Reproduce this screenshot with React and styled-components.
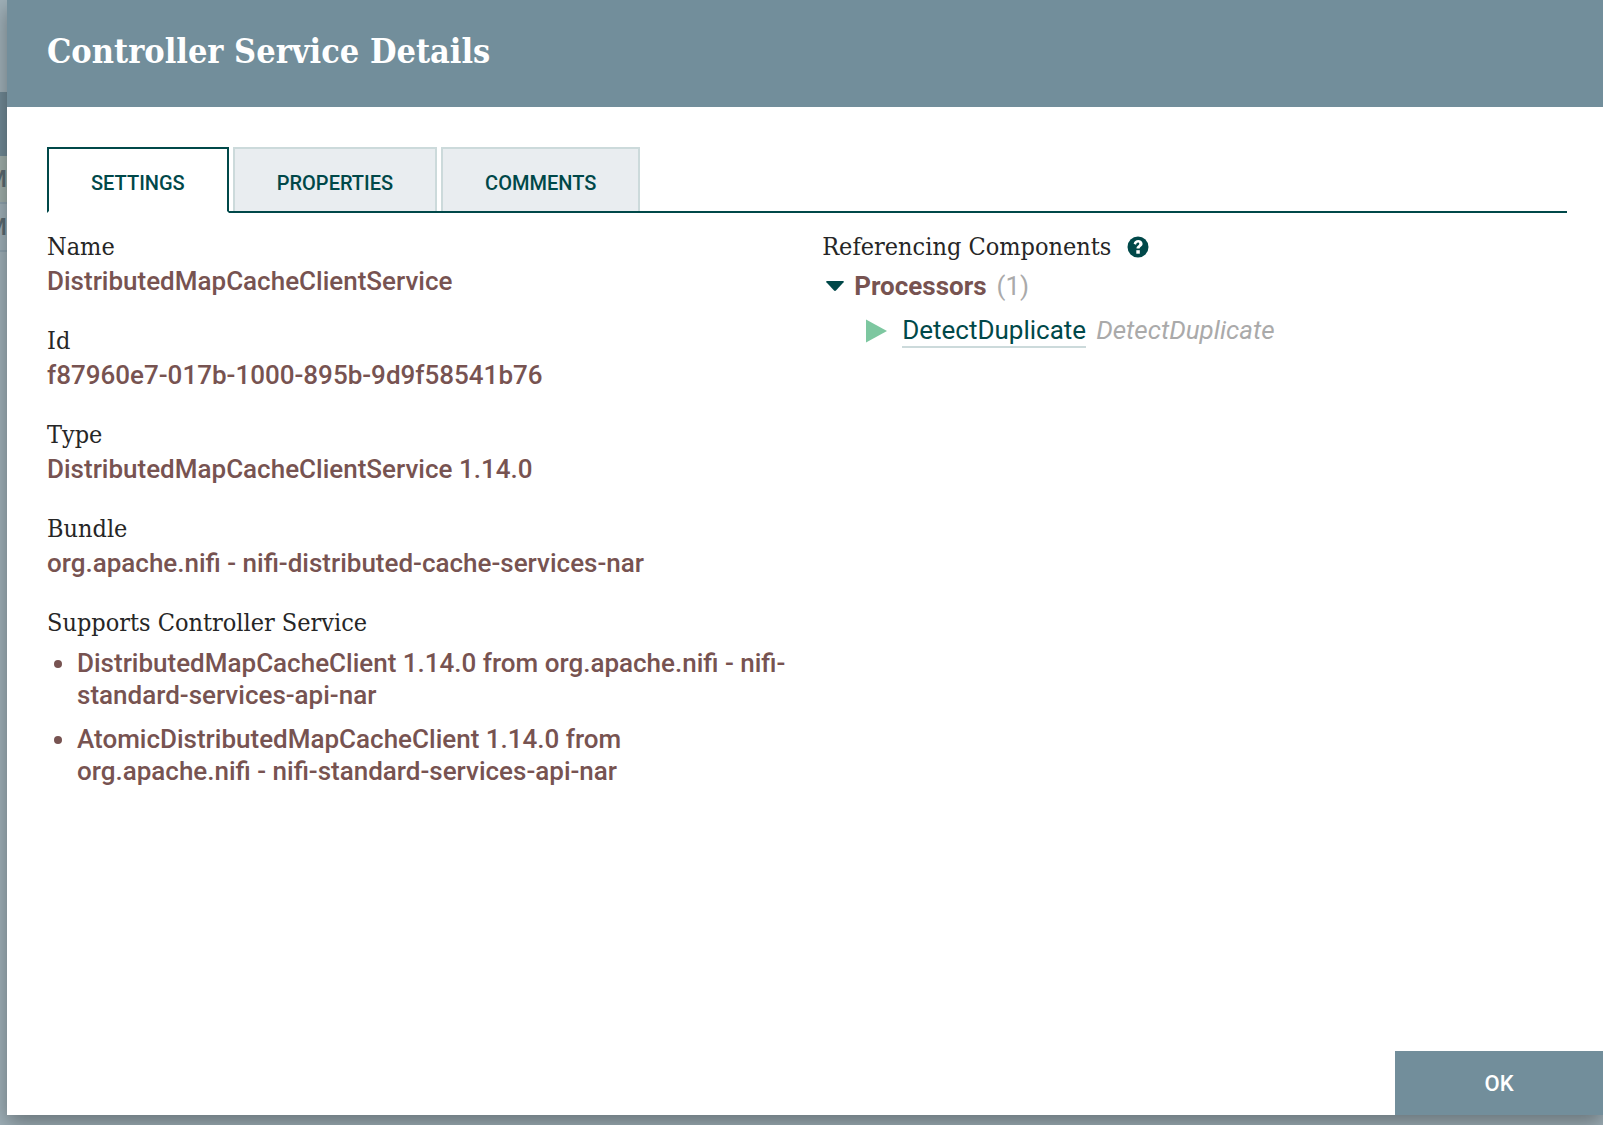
import React, { useState } from "react";
import styled, { createGlobalStyle } from "styled-components";

const colors = {
  slate: "#728e9b",
  teal: "#004849",
  brown: "#775351",
  mist: "#ccdadb",
  muted: "#aaaaaa",
  running: "#7dc7a0",
};

const slab = '"Roboto Slab", "DejaVu Serif Condensed", "DejaVu Serif", serif';

const GlobalStyle = createGlobalStyle`
  * { box-sizing: border-box; }
  body {
    margin: 0;
    font-family: Roboto, "Liberation Sans", sans-serif;
    font-size: 26px;
    line-height: 32px;
    color: ${colors.brown};
    background: #9aabb3;
  }
`;

const Page = styled.div`
  display: grid;
  grid-template: minmax(100vh, auto) / minmax(0, 1fr);
  overflow: hidden;
`;

const Backdrop = styled.div`
  grid-area: 1 / 1;
  padding-top: 92px;
  background: #9fb0b8;
`;

const BackdropHeader = styled.div`
  height: 64px;
  background: #708995;
`;

const BackdropRow = styled.div`
  display: flex;
  justify-content: flex-end;
  align-items: center;
  width: 7px;
  height: 48px;
  overflow: hidden;
  border-bottom: 2px solid #8fa3ae;
  background: ${(p) => (p.$selected ? "#a0afaa" : "#9fb0b8")};
  color: #5a6a72;
  font-size: 24px;
  font-weight: 500;
`;

const Dialog = styled.section`
  grid-area: 1 / 1;
  display: flex;
  flex-direction: column;
  margin: 0 0 10px 7px;
  background: #fff;
  box-shadow: 0 8px 20px rgba(0, 0, 0, 0.35);
`;

const DialogHeader = styled.header`
  display: flex;
  align-items: center;
  height: 107px;
  padding: 0 40px 6px;
  background: ${colors.slate};
`;

const Title = styled.h1`
  margin: 0;
  color: #fff;
  font-family: ${slab};
  font-size: 34px;
  line-height: 48px;
  font-weight: 700;
`;

const Body = styled.div`
  flex: 1;
  padding: 40px 36px 40px 40px;
`;

const TabList = styled.div`
  display: flex;
  align-items: flex-start;
  gap: 4px;
  border-bottom: 2px solid ${colors.teal};
`;

const Tab = styled.button`
  height: ${(p) => (p.$active ? 66 : 64)}px;
  margin: 0 0 ${(p) => (p.$active ? -2 : 0)}px;
  padding: 6px 42px 0;
  border: 2px solid ${(p) => (p.$active ? colors.teal : colors.mist)};
  border-bottom: ${(p) => (p.$active ? "2px solid #fff" : "0")};
  background: ${(p) => (p.$active ? "#fff" : "#e9edf0")};
  color: ${colors.teal};
  font-family: inherit;
  font-size: 20px;
  font-weight: 500;
  text-transform: uppercase;
  cursor: pointer;
`;

const Columns = styled.div`
  display: grid;
  grid-template-columns: 51fr 49fr;
  padding-top: 18px;
`;

const Settings = styled.dl`
  margin: 0;
  padding-right: 30px;
`;

const Setting = styled.div`
  margin-bottom: 28px;
`;

const labelText = `
  margin: 0;
  color: #262626;
  font-family: ${slab};
  font-size: 25px;
  line-height: 32px;
  font-weight: 400;
`;

const Label = styled.dt`
  ${labelText}
`;

const Value = styled.dd`
  margin: 0;
  padding-top: 2px;
  font-weight: 500;
`;

const ServiceList = styled.ul`
  display: grid;
  gap: 12px;
  margin: 0;
  padding: 6px 0 0 30px;
`;

const References = styled.section`
  color: ${colors.muted};
`;

const ReferencesHeader = styled.div`
  display: flex;
  align-items: center;
  gap: 16px;
`;

const Heading = styled.h2`
  ${labelText}
`;

const IconButton = styled.button`
  display: flex;
  padding: 0;
  border: 0;
  background: none;
  color: ${colors.teal};
  cursor: pointer;
`;

const Group = styled.button`
  display: flex;
  align-items: center;
  gap: 10px;
  margin-top: 7px;
  padding: 0 0 0 4px;
  border: 0;
  background: none;
  color: ${colors.muted};
  font: inherit;
  cursor: pointer;
`;

const GroupName = styled.span`
  color: ${colors.brown};
  font-weight: 700;
`;

const ComponentRow = styled.div`
  display: flex;
  align-items: baseline;
  gap: 10px;
  padding: 12px 0 0 44px;
`;

const RunIcon = styled.svg`
  align-self: center;
  margin-right: 5px;
`;

const ComponentLink = styled.a`
  border-bottom: 2px solid ${colors.mist};
  color: ${colors.teal};
  text-decoration: none;
`;

const ComponentType = styled.span`
  font-style: italic;
`;

const Footer = styled.footer`
  display: flex;
  justify-content: flex-end;
`;

const OkButton = styled.button`
  width: 208px;
  height: 64px;
  padding: 0;
  border: 0;
  background: ${colors.slate};
  color: #fff;
  font-family: inherit;
  font-size: 22px;
  font-weight: 500;
  cursor: pointer;
`;

const tabs = ["Settings", "Properties", "Comments"];

const settings = [
  ["Name", "DistributedMapCacheClientService"],
  ["Id", "f87960e7-017b-1000-895b-9d9f58541b76"],
  ["Type", "DistributedMapCacheClientService 1.14.0"],
  ["Bundle", "org.apache.nifi - nifi-distributed-cache-services-nar"],
];

const services = [
  "DistributedMapCacheClient 1.14.0 from org.apache.nifi - nifi-standard-services-api-nar",
  "AtomicDistributedMapCacheClient 1.14.0 from org.apache.nifi - nifi-standard-services-api-nar",
];

function HelpIcon() {
  return (
    <svg width="22" height="22" viewBox="0 0 22 22" aria-hidden="true">
      <circle cx="11" cy="11" r="10.5" fill="currentColor" />
      <path
        d="M6.600 7.700C7.300 5.300 8.900 4 11.200 4c2.400 0 4.400 1.500 4.400 3.700 0 2.900-3 3-3 4.900H9.500c0-3.100 2.800-3.200 2.800-4.900 0-.7-.5-1.200-1.300-1.200-1 0-1.400.8-2 2.200z"
        fill="#fff"
      />
      <rect x="9.300" y="14.200" width="3.500" height="3.500" fill="#fff" />
    </svg>
  );
}

export default function App() {
  const [active, setActive] = useState("Settings");
  const [open, setOpen] = useState(true);

  return (
    <>
      <GlobalStyle />
      <Page>
        <Backdrop aria-hidden="true">
          <BackdropHeader />
          <BackdropRow $selected>M</BackdropRow>
          <BackdropRow>M</BackdropRow>
        </Backdrop>
        <Dialog role="dialog" aria-labelledby="dialog-title">
          <DialogHeader>
            <Title id="dialog-title">Controller Service Details</Title>
          </DialogHeader>
          <Body>
            <TabList role="tablist">
              {tabs.map((tab) => (
                <Tab
                  key={tab}
                  type="button"
                  role="tab"
                  aria-selected={tab === active}
                  $active={tab === active}
                  onClick={() => setActive(tab)}
                >
                  {tab}
                </Tab>
              ))}
            </TabList>
            {active === "Settings" && (
              <Columns role="tabpanel">
                <Settings>
                  {settings.map(([name, value]) => (
                    <Setting key={name}>
                      <Label>{name}</Label>
                      <Value>{value}</Value>
                    </Setting>
                  ))}
                  <Setting>
                    <Label>Supports Controller Service</Label>
                    <Value>
                      <ServiceList>
                        {services.map((service) => (
                          <li key={service}>{service}</li>
                        ))}
                      </ServiceList>
                    </Value>
                  </Setting>
                </Settings>
                <References>
                  <ReferencesHeader>
                    <Heading>Referencing Components</Heading>
                    <IconButton type="button" aria-label="Help">
                      <HelpIcon />
                    </IconButton>
                  </ReferencesHeader>
                  <Group
                    type="button"
                    aria-expanded={open}
                    onClick={() => setOpen(!open)}
                  >
                    <svg width="18" height="10" viewBox="0 0 18 10" aria-hidden="true">
                      <path d="M1 0h16q1.500 0 .6 1.200L10.200 9.300Q9 10.500 7.800 9.300L.4 1.200Q-.5 0 1 0z" fill={colors.teal} />
                    </svg>
                    <GroupName>Processors</GroupName>
                    <span>(1)</span>
                  </Group>
                  {open && (
                    <ComponentRow>
                      <RunIcon width="21" height="24" viewBox="0 0 21 24" aria-hidden="true">
                        <path d="M0 0.500L21 12L0 23.500z" fill={colors.running} />
                      </RunIcon>
                      <ComponentLink href="#detect-duplicate">DetectDuplicate</ComponentLink>
                      <ComponentType>DetectDuplicate</ComponentType>
                    </ComponentRow>
                  )}
                </References>
              </Columns>
            )}
          </Body>
          <Footer>
            <OkButton type="button">OK</OkButton>
          </Footer>
        </Dialog>
      </Page>
    </>
  );
}
